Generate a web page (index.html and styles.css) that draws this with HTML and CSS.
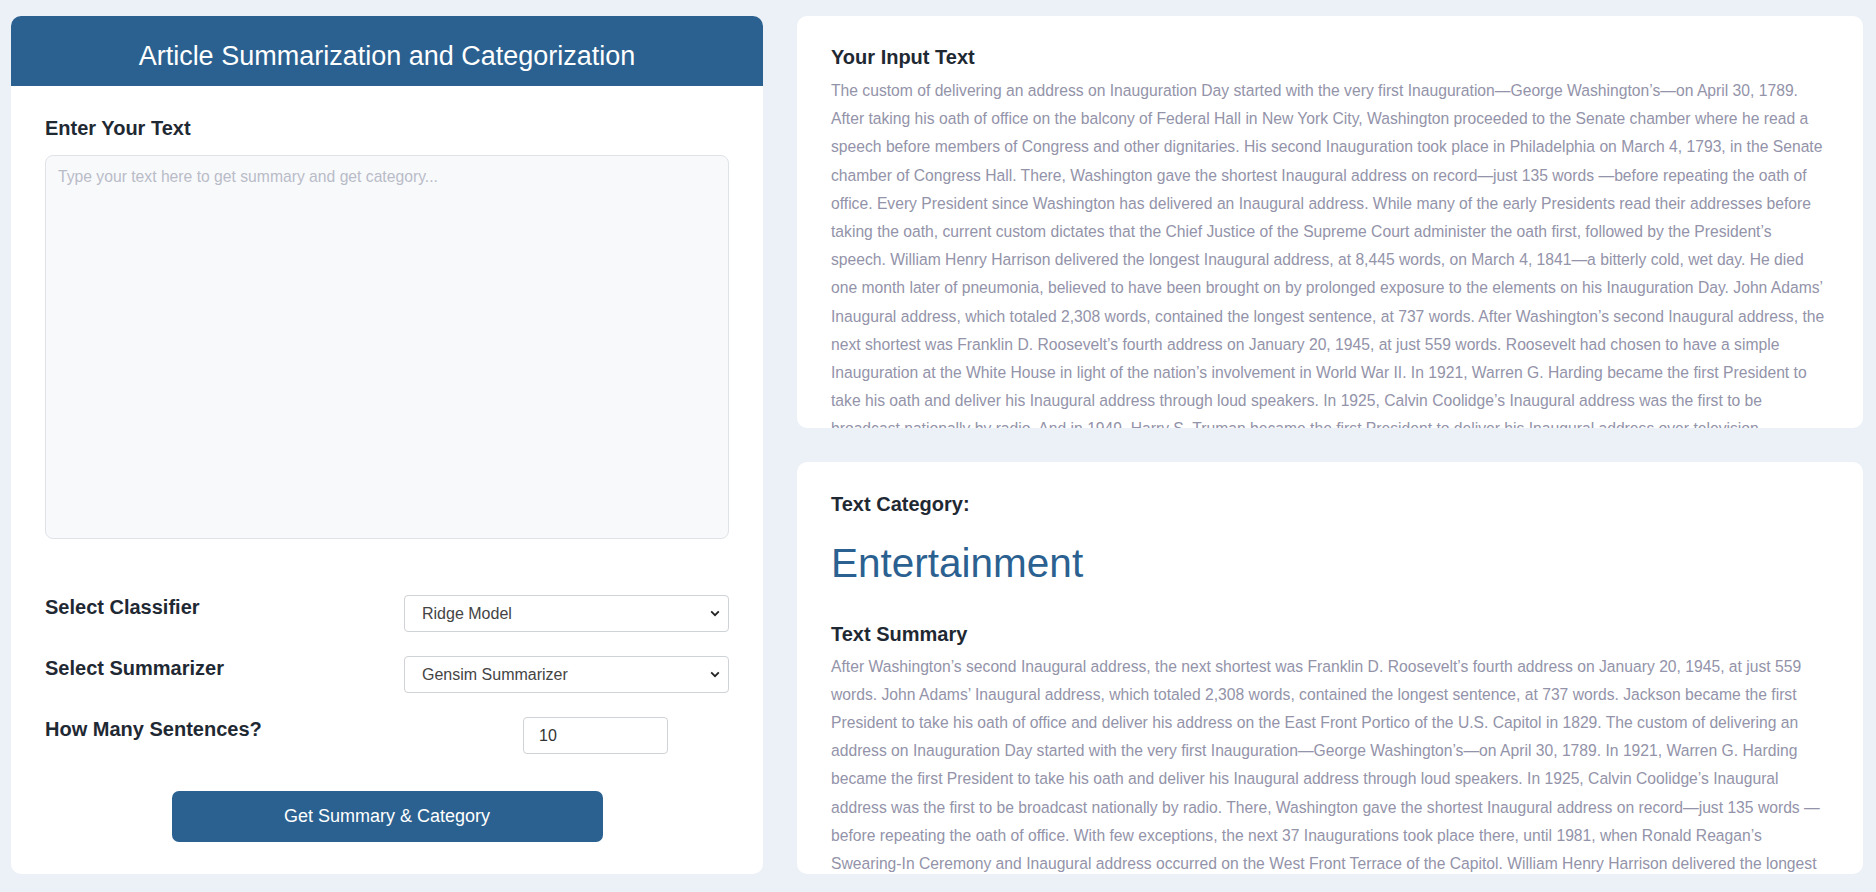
FILE: index.html
```html
<!DOCTYPE html>
<html lang="en">
<head>
<meta charset="utf-8">
<title>Article Summarization and Categorization</title>
<link rel="stylesheet" href="styles.css">
</head>
<body>
<div class="page">
  <section class="card form-card">
    <header class="form-header">
      <h1 class="form-title">Article Summarization and Categorization</h1>
    </header>
    <div class="form-body">
      <h3 class="section-title">Enter Your Text</h3>
      <textarea class="text-input" placeholder="Type your text here to get summary and get category..."></textarea>
      <div class="options">
        <div class="option-row">
          <label class="option-label">Select Classifier</label>
          <div class="select-wrap">
            <select class="select">
              <option>Ridge Model</option>
              <option>Logistic Regression</option>
              <option>SVM Model</option>
            </select>
            <svg class="chevron" width="10" height="7" viewBox="0 0 10 7"><path d="M1.2 1.4 L5 5.2 L8.8 1.4" fill="none" stroke="#222" stroke-width="1.8"/></svg>
          </div>
        </div>
        <div class="option-row">
          <label class="option-label">Select Summarizer</label>
          <div class="select-wrap">
            <select class="select">
              <option>Gensim Summarizer</option>
              <option>NLTK Summarizer</option>
            </select>
            <svg class="chevron" width="10" height="7" viewBox="0 0 10 7"><path d="M1.2 1.4 L5 5.2 L8.8 1.4" fill="none" stroke="#222" stroke-width="1.8"/></svg>
          </div>
        </div>
        <div class="option-row">
          <label class="option-label">How Many Sentences?</label>
          <input class="number-input" type="text" value="10">
        </div>
      </div>
      <div class="actions">
        <button class="submit-btn" type="button">Get Summary &amp; Category</button>
      </div>
    </div>
  </section>

  <div class="results">
    <section class="card result-card result-card--top">
      <h3 class="section-title tight">Your Input Text</h3>
      <p class="body-text">The custom of delivering an address on Inauguration Day started with the very first Inauguration—George Washington’s—on April 30, 1789. After taking his oath of office on the balcony of Federal Hall in New York City, Washington proceeded to the Senate chamber where he read a speech before members of Congress and other dignitaries. His second Inauguration took place in Philadelphia on March 4, 1793, in the Senate chamber of Congress Hall. There, Washington gave the shortest Inaugural address on record—just 135 words —before repeating the oath of office. Every President since Washington has delivered an Inaugural address. While many of the early Presidents read their addresses before taking the oath, current custom dictates that the Chief Justice of the Supreme Court administer the oath first, followed by the President’s speech. William Henry Harrison delivered the longest Inaugural address, at 8,445 words, on March 4, 1841—a bitterly cold, wet day. He died one month later of pneumonia, believed to have been brought on by prolonged exposure to the elements on his Inauguration Day. John Adams’ Inaugural address, which totaled 2,308 words, contained the longest sentence, at 737 words. After Washington’s second Inaugural address, the next shortest was Franklin D. Roosevelt’s fourth address on January 20, 1945, at just 559 words. Roosevelt had chosen to have a simple Inauguration at the White House in light of the nation’s involvement in World War II. In 1921, Warren G. Harding became the first President to take his oath and deliver his Inaugural address through loud speakers. In 1925, Calvin Coolidge’s Inaugural address was the first to be broadcast nationally by radio. And in 1949, Harry S. Truman became the first President to deliver his Inaugural address over television.</p>
    </section>
    <section class="card result-card result-card--bottom">
      <h3 class="section-title">Text Category:</h3>
      <div class="category">Entertainment</div>
      <h3 class="section-title tighter">Text Summary</h3>
      <p class="body-text">After Washington’s second Inaugural address, the next shortest was Franklin D. Roosevelt’s fourth address on January 20, 1945, at just 559 words. John Adams’ Inaugural address, which totaled 2,308 words, contained the longest sentence, at 737 words. Jackson became the first President to take his oath of office and deliver his address on the East Front Portico of the U.S. Capitol in 1829. The custom of delivering an address on Inauguration Day started with the very first Inauguration—George Washington’s—on April 30, 1789. In 1921, Warren G. Harding became the first President to take his oath and deliver his Inaugural address through loud speakers. In 1925, Calvin Coolidge’s Inaugural address was the first to be broadcast nationally by radio. There, Washington gave the shortest Inaugural address on record—just 135 words —before repeating the oath of office. With few exceptions, the next 37 Inaugurations took place there, until 1981, when Ronald Reagan’s Swearing-In Ceremony and Inaugural address occurred on the West Front Terrace of the Capitol. William Henry Harrison delivered the longest Inaugural address, at 8,445 words, on March 4, 1841—a bitterly cold, wet day.</p>
    </section>
  </div>
</div>
</body>
</html>
```

FILE: styles.css
```css
* {
  box-sizing: border-box;
}

html, body {
  margin: 0;
  padding: 0;
}

body {
  background: #ecf1f7;
  font-family: "Liberation Sans", Arial, sans-serif;
  color: #1f2933;
}

.page {
  display: grid;
  grid-template-columns: 752px 1066px;
  column-gap: 34px;
  padding: 16px 13px 18px 11px;
  height: 892px;
}

.card {
  background: #ffffff;
  border-radius: 10px;
}

.form-card {
  display: flex;
  flex-direction: column;
  overflow: hidden;
}

.form-header {
  background: #2b6190;
  height: 70px;
  padding-top: 25px;
}

.form-title {
  margin: 0;
  text-align: center;
  color: #ffffff;
  font-size: 27px;
  font-weight: 400;
  line-height: 31px;
}

.form-body {
  padding: 31px 34px 32px;
  display: flex;
  flex-direction: column;
}

.section-title {
  margin: 0 0 15px;
  font-size: 20px;
  font-weight: 700;
  line-height: 23px;
  color: #1f2933;
}

.section-title.tight {
  margin-bottom: 8px;
}

.section-title.tighter {
  margin-bottom: 7px;
}

.text-input {
  display: block;
  width: 100%;
  height: 384px;
  resize: none;
  background: #f8f9fb;
  border: 1px solid #dfe2e7;
  border-radius: 8px;
  padding: 12px;
  font-family: "Liberation Sans", Arial, sans-serif;
  font-size: 15.7px;
  color: #333;
  outline: none;
}

.text-input::placeholder {
  color: #b9bcc8;
}

.options {
  margin-top: 56px;
  display: flex;
  flex-direction: column;
  gap: 24px;
}

.option-row {
  display: flex;
  justify-content: space-between;
  align-items: flex-start;
  height: 37px;
}

.option-label {
  font-size: 20px;
  font-weight: 700;
  line-height: 23px;
  margin-top: 1px;
  color: #1f2933;
}

.select-wrap {
  position: relative;
  width: 325px;
  height: 37px;
}

.select {
  appearance: none;
  -webkit-appearance: none;
  width: 100%;
  height: 37px;
  border: 1px solid #cfd2d6;
  border-radius: 4px;
  background: #ffffff;
  padding: 0 30px 0 17px;
  font-family: "Liberation Sans", Arial, sans-serif;
  font-size: 16px;
  color: #444;
  outline: none;
}

.chevron {
  position: absolute;
  right: 9px;
  top: 15px;
  pointer-events: none;
}

.number-input {
  width: 145px;
  height: 37px;
  margin-right: 61px;
  border: 1px solid #cfd2d6;
  border-radius: 4px;
  padding: 0 15px;
  font-family: "Liberation Sans", Arial, sans-serif;
  font-size: 16px;
  color: #333;
  outline: none;
}

.actions {
  margin-top: 37px;
  display: flex;
  justify-content: center;
}

.submit-btn {
  width: 431px;
  height: 51px;
  border: none;
  border-radius: 7px;
  background: #2b6190;
  color: #ffffff;
  font-family: "Liberation Sans", Arial, sans-serif;
  font-size: 18px;
  cursor: pointer;
}

.results {
  display: flex;
  flex-direction: column;
  gap: 34px;
  min-height: 0;
}

.result-card {
  flex: 1 1 0;
  min-height: 0;
  overflow: hidden;
  padding: 30px 34px;
}

.result-card--bottom {
  padding-top: 31px;
}

.body-text {
  margin: 0;
  font-size: 15.68px;
  line-height: 28.2px;
  color: #9393a9;
}

.category {
  margin: 24px 0 37px;
  font-size: 40.5px;
  line-height: 46px;
  color: #2b6190;
}
```
